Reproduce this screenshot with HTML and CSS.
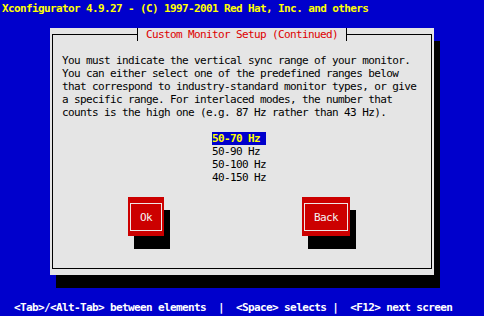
FILE: index.html
```html
<!DOCTYPE html>
<html lang="en">
<head>
    <meta charset="UTF-8">
    <title>Xconfigurator</title>
    <link rel="stylesheet" href="styles.css">
</head>
<body>
<div class="screen">
    <div class="topbar">Xconfigurator 4.9.27 - (C) 1997-2001 Red Hat, Inc. and others</div>
    <div class="dialog">
        <fieldset class="frame">
            <legend class="frame-title">Custom Monitor Setup (Continued)</legend>
            <p class="intro">You must indicate the vertical sync range of your monitor.<br>
                You can either select one of the predefined ranges below<br>
                that correspond to industry-standard monitor types, or give<br>
                a specific range. For interlaced modes, the number that<br>
                counts is the high one (e.g. 87 Hz rather than 43 Hz).</p>
            <ul class="ranges">
                <li class="current">50-70 Hz</li>
                <li>50-90 Hz</li>
                <li>50-100 Hz</li>
                <li>40-150 Hz</li>
            </ul>
            <div class="buttons">
                <div class="button"><span class="button-face">Ok</span></div>
                <div class="button"><span class="button-face">Back</span></div>
            </div>
        </fieldset>
    </div>
    <div class="helpline">  &lt;Tab&gt;/&lt;Alt-Tab&gt; between elements  |  &lt;Space&gt; selects |  &lt;F12&gt; next screen</div>
</div>
</body>
</html>
```

FILE: styles.css
```css
* {
    margin: 0;
    padding: 0;
    box-sizing: border-box;
}

body {
    width: 484px;
    height: 316px;
    overflow: hidden;
    background: #0000cc;
    font-family: "DejaVu Sans Mono", "Liberation Mono", monospace;
    font-size: 11px;
    letter-spacing: -0.62px;
    line-height: 13px;
}

.screen {
    padding: 2px;
}

.topbar {
    height: 13px;
    color: #ffff00;
    font-weight: bold;
    white-space: pre;
}

.dialog {
    width: 384px;
    height: 247px;
    margin: 13px 0 0 48px;
    padding: 0 2px 6px 2px;
    background: #e5e5e5;
    box-shadow: 6px 13px 0 #000;
    display: flex;
    flex-direction: column;
}

.frame {
    flex: 1;
    min-width: 0;
    border: 1px solid #000;
    padding: 13px 0 0 9px;
    color: #000;
}

.frame-title {
    margin-left: 75px;
    padding: 0 8px;
    height: 13px;
    line-height: 13px;
    border-left: 1px solid #000;
    border-right: 1px solid #000;
    color: #dd0000;
    white-space: pre;
}

.intro {
    white-space: nowrap;
}

.ranges {
    list-style: none;
    width: 54px;
    margin: 13px 0 0 150px;
}

.ranges li {
    height: 13px;
    white-space: pre;
}

.ranges li.current {
    background: #0000cc;
    color: #ffff00;
    font-weight: bold;
}

.buttons {
    display: flex;
    gap: 138px;
    margin: 13px 0 0 66px;
}

.button {
    height: 39px;
    padding: 6px 2px 5px 2px;
    background: #cc0000;
    box-shadow: 6px 13px 0 #000;
    display: flex;
}

.button-face {
    display: flex;
    align-items: center;
    justify-content: center;
    border: 1px solid #f0e6e6;
    color: #f4f4f4;
    padding: 0 9px;
}

.helpline {
    margin-top: 26px;
    height: 13px;
    color: #ffffff;
    font-weight: bold;
    white-space: pre;
}
```
